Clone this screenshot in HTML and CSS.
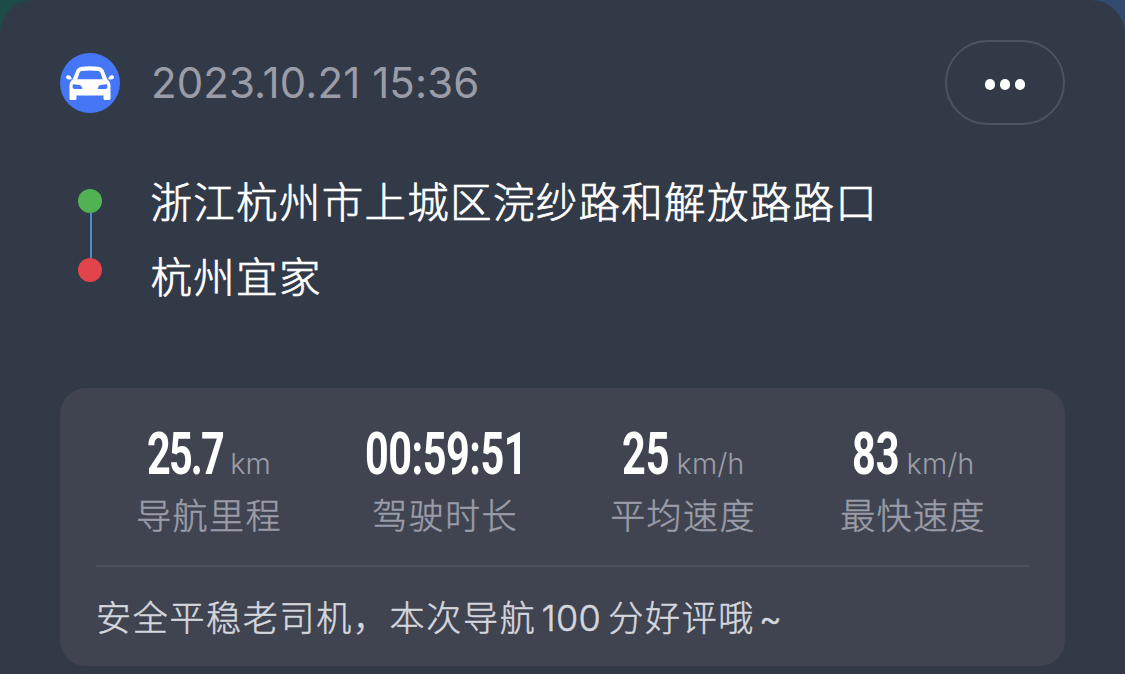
FILE: index.html
```html
<!DOCTYPE html>
<html lang="zh-CN">
<head>
<meta charset="utf-8">
<title>导航记录</title>
<link rel="stylesheet" href="styles.css">
</head>
<body>
<main class="sheet">
  <header class="head">
    <svg class="car" viewBox="0 0 60 60" aria-hidden="true">
      <circle cx="30" cy="30" r="30" fill="#4576f6"/>
      <path fill="#fff" fill-rule="evenodd" d="M20.5 14 Q30 12.6 39.5 14 Q42 14.5 43.5 17 L47.4 26.5 Q50.500 28.8 50.500 32.5 V45.5 Q50.500 47 49 47 H45 Q43.500 47 43.500 45.5 V42.5 H16.500 V45.5 Q16.500 47 15 47 H11 Q9.500 47 9.500 45.500 V32.500 Q9.500 28.800 12.600 26.500 L16.500 17 Q18 14.500 20.500 14 Z M21.500 18 Q20.200 18.300 19.500 19.700 L17.300 26.300 H42.700 L40.500 19.700 Q39.800 18.300 38.500 18 Q30 17 21.500 18 Z M13 31.300 L20 32 Q22 32.800 22.300 36 H14 Q12.300 35.500 12.500 33 Z M47 31.300 L40 32 Q38 32.800 37.700 36 H46 Q47.700 35.500 47.500 33 Z"/>
      <path fill="#fff" d="M7.500 22.300 Q9.500 22 10.700 23.500 L12 26.300 L8.500 26.500 Q6 26.300 6 24.300 Q6 22.600 7.500 22.300 Z M52.500 22.300 Q50.500 22 49.300 23.500 L48 26.300 L51.500 26.500 Q54 26.300 54 24.300 Q54 22.600 52.500 22.300 Z"/>
    </svg>
    <time class="date">2023.10.21 15:36</time>
    <button class="more" aria-label="更多"><i class="dot"></i><i class="dot"></i><i class="dot"></i></button>
  </header>

  <section class="route">
    <div class="track"><i class="stop start"></i><i class="line"></i><i class="stop end"></i></div>
    <div class="places"><p class="place">浙江杭州市上城区浣纱路和解放路路口</p><p class="place">杭州宜家</p></div>
  </section>

  <section class="card">
    <div class="stats">
      <div class="stat">
        <div class="value"><div class="num distance"><span class="digits">25.7</span></div><span class="unit">km</span></div>
        <div class="label">导航里程</div>
      </div>
      <div class="stat">
        <div class="value"><div class="num duration"><span class="digits">00:59:51</span></div></div>
        <div class="label">驾驶时长</div>
      </div>
      <div class="stat">
        <div class="value"><div class="num speed"><span class="digits">25</span></div><span class="unit wide">km/h</span></div>
        <div class="label">平均速度</div>
      </div>
      <div class="stat">
        <div class="value"><div class="num speed"><span class="digits">83</span></div><span class="unit wide">km/h</span></div>
        <div class="label">最快速度</div>
      </div>
    </div>
    <p class="comment">安全平稳老司机，本次导航<span class="score">100</span>分好评哦<span class="tilde">~</span></p>
  </section>
</main>
</body>
</html>
```
FILE: styles.css
```css
* { box-sizing: border-box; }
body {
  margin: 0;
  height: 674px;
  overflow: hidden;
  background: linear-gradient(90deg, #1d4b48 0 50%, #334a70 50%);
  font-family: Inter, "Noto Sans CJK SC", sans-serif;
  color: #fff;
}
p { margin: 0; }
.sheet {
  height: 674px;
  padding: 40px 60px 0;
  border-radius: 34px 34px 0 0;
  background: #333a47;
}
.head { display: flex; align-items: center; height: 85px; }
.car { width: 60px; height: 60px; }
.date {
  margin-left: 31px;
  font-size: 42px;
  line-height: 60px;
  letter-spacing: 0.08px;
  color: #9a9da8;
}
.more {
  display: flex;
  align-items: center;
  justify-content: center;
  gap: 5px;
  width: 120px;
  height: 85px;
  margin-left: auto;
  padding: 3px 0 0;
  border: 2px solid #4d5360;
  border-radius: 43px;
  background: none;
}
.dot { width: 10px; height: 11px; border-radius: 5px; background: #fff; }
.route { display: flex; height: 263px; padding-top: 38px; }
.track { display: flex; flex-direction: column; align-items: center; width: 60px; padding-top: 26px; }
.stop { width: 24px; height: 24px; border-radius: 50%; }
.start { background: #52b153; }
.end { background: #e1444b; }
.line { width: 2px; height: 45px; margin-left: 2px; background: #4a8fd0; }
.places { padding-left: 30.5px; }
.place {
  height: 75px;
  line-height: 75px;
  font-family: "Noto Sans CJK SC", sans-serif;
  font-size: 41.5px;
  font-weight: 300;
  letter-spacing: 1.3px;
  white-space: nowrap;
  -webkit-text-stroke: 0.7px currentColor;
}
.card {
  height: 278px;
  padding: 43px 36px 0;
  border-radius: 26px;
  background: #404451;
}
.stats {
  display: grid;
  grid-template-columns: 225px 247px 229px 231px;
  height: 136px;
  border-bottom: 2px solid #4b505d;
}
.stat { display: flex; flex-direction: column; align-items: center; }
.value { display: flex; align-items: baseline; height: 53px; padding-left: 1px; }
.num {
  font-family: Roboto, sans-serif;
  font-size: 60px;
  font-weight: 700;
  line-height: 46px;
  white-space: nowrap;
}
.digits { display: inline-block; transform: scaleX(0.69); transform-origin: left; }
.distance { width: 77px; letter-spacing: -2.7px; }
.duration { width: 160px; letter-spacing: -0.7px; }
.speed { width: 48px; }
.unit { margin-left: 6px; font-size: 29px; line-height: 30px; font-weight: 350; color: #9a9da8; }
.wide { margin-left: 7px; }
.label {
  height: 60px;
  padding-left: 1px;
  line-height: 60px;
  font-family: "Noto Sans CJK SC", sans-serif;
  font-size: 35px;
  font-weight: 300;
  letter-spacing: 1.4px;
  color: #9a9da8;
  -webkit-text-stroke: 0.5px currentColor;
}
.comment {
  height: 99px;
  line-height: 97px;
  font-family: "Noto Sans CJK SC", sans-serif;
  font-size: 35px;
  font-weight: 300;
  letter-spacing: 1.7px;
  white-space: nowrap;
  color: #d5d7de;
  -webkit-text-stroke: 0.5px currentColor;
}
.score { margin: 0 7px 0 5px; font-family: Inter, sans-serif; font-size: 36px; letter-spacing: 0.4px; }
.tilde { margin-left: 4px; font-family: Inter, sans-serif; }
```
